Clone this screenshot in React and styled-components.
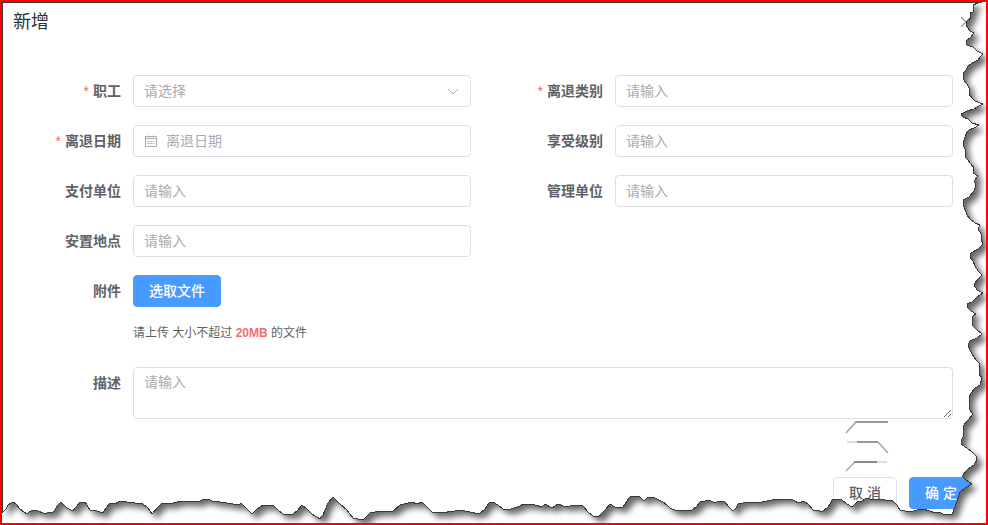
import React from 'react'
import styled, { createGlobalStyle, ThemeProvider } from 'styled-components'
import { X } from 'lucide-react'

const theme = {
  colors: {
    primary: '#479aff',
    danger: '#f56c6c',
    title: '#303133',
    text: '#606266',
    placeholder: '#a8abb2',
    border: '#dcdfe6',
    white: '#ffffff',
  },
  fonts: {
    sansSerif: '"Liberation Sans", "Noto Sans CJK SC", sans-serif',
  },
}

const GlobalStyle = createGlobalStyle`
  * {
    box-sizing: border-box;
  }

  body {
    margin: 0;
    background: #fff;
    font-family: ${theme.fonts.sansSerif};
  }

  button, input, select, textarea {
    font-family: inherit;
  }
`

const Frame = styled.main`
  position: relative;
  min-height: 100vh;
  border: 2px solid #ff0000;
  background: ${props => props.theme.colors.white};
  overflow: hidden;
`

const Header = styled.header`
  display: flex;
  align-items: center;
  justify-content: space-between;
  padding: 8px 11px 0;
`

const Title = styled.h1`
  margin: 0;
  color: ${props => props.theme.colors.title};
  font-size: 18px;
  font-weight: 400;
  line-height: 24px;
`

const CloseButton = styled.button`
  display: flex;
  margin: 0;
  padding: 0;
  border: none;
  background: none;
  color: #909399;
  cursor: pointer;
`

const Form = styled.form`
  display: grid;
  grid-template-columns: 1fr 1fr;
  gap: 18px 24px;
  padding: 41px 33px 0 11px;
`

const Item = styled.div`
  display: flex;
  align-items: flex-start;
  grid-column: ${props => props.$wide ? '1 / -1' : props.$alone ? '1' : 'auto'};
`

const Label = styled.label`
  flex: 0 0 120px;
  padding-right: 12px;
  color: ${props => props.theme.colors.text};
  font-size: 14px;
  font-weight: 700;
  line-height: 32px;
  text-align: right;
`

const Star = styled.span`
  margin-right: 4px;
  color: ${props => props.theme.colors.danger};
  font-weight: 400;
`

const Field = styled.div`
  display: flex;
  flex: 1;
  align-items: center;
  gap: 8px;
  min-width: 0;
  height: 32px;
  padding: 0 10px;
  border: 1px solid ${props => props.theme.colors.border};
  border-radius: 4px;
  color: ${props => props.theme.colors.placeholder};

  &:focus-within {
    border-color: ${props => props.theme.colors.primary};
  }
`

const Input = styled.input`
  flex: 1;
  min-width: 0;
  height: 30px;
  padding: 0;
  border: none;
  outline: none;
  background: none;
  color: ${props => props.theme.colors.text};
  font-size: 14px;

  &::placeholder {
    color: ${props => props.theme.colors.placeholder};
  }
`

const Select = styled.select`
  flex: 1;
  min-width: 0;
  height: 30px;
  padding: 0;
  border: none;
  outline: none;
  appearance: none;
  background: none;
  color: ${props => props.theme.colors.placeholder};
  font-size: 14px;
`

const Textarea = styled.textarea`
  flex: 1;
  min-width: 0;
  padding: 4px 10px;
  border: 1px solid ${props => props.theme.colors.border};
  border-radius: 4px;
  outline: none;
  color: ${props => props.theme.colors.text};
  font-size: 14px;
  line-height: 21px;
  resize: vertical;

  &::placeholder {
    color: ${props => props.theme.colors.placeholder};
  }
`

const Upload = styled.div`
  padding-bottom: 6px;
`

const Hint = styled.p`
  margin: 16px 0 0;
  color: ${props => props.theme.colors.text};
  font-size: 12px;
  line-height: 20px;

  b {
    color: ${props => props.theme.colors.danger};
  }
`

const Button = styled.button`
  min-width: 64px;
  height: 32px;
  padding: 0 15px;
  border: 1px solid ${props => props.$primary ? props.theme.colors.primary : props.theme.colors.border};
  border-radius: 4px;
  background: ${props => props.$primary ? props.theme.colors.primary : props.theme.colors.white};
  color: ${props => props.$primary ? props.theme.colors.white : props.theme.colors.text};
  font-size: 14px;
  font-weight: 500;
  line-height: 28px;
  white-space: nowrap;
  cursor: pointer;
`

const Footer = styled.footer`
  display: flex;
  justify-content: flex-end;
  gap: 12px;
  padding: 58px 13px 14px;
`

const Overlay = styled.svg`
  position: absolute;
  top: -2px;
  left: -2px;
  width: calc(100% + 4px);
  height: calc(100% + 4px);
  pointer-events: none;
`

const RIGHT_EDGE = `982,2 978,3 973,5 973,12 970,13 971,18 968,20 966,22 966,25 968,28 970,31 974,33
  971,37 966,41 967,45 973,47 977,51 983,54 980,57 978,60 974,62 968,66 966,70 963,73 963,79 967,84
  969,88 969,94 972,98 975,101 983,104 977,107 974,109 967,111 961,114 963,117 968,119 972,123 979,125
  974,128 969,130 966,134 964,140 963,145 965,149 965,157 968,160 971,164 974,168 973,173 978,176
  974,181 976,185 974,191 969,197 963,200 964,207 967,215 970,219 975,223 980,225 978,229 981,234
  981,239 983,244 978,249 971,253 970,257 973,261 975,266 978,271 982,275 977,280 974,285 977,290
  983,293 977,297 972,302 967,304 968,308 971,311 976,314 972,317 973,326 977,330 982,334 977,338
  970,341 968,345 970,350 972,354 976,360 980,364 979,370 979,374 982,378 980,385 975,388 971,393
  969,398 970,410 973,414 968,420 963,426 964,435 961,441 962,445 967,448 972,452 976,456 977,460
  974,465 968,469 962,476 966,480 972,484 965,488 960,492 958,498 955,507 952,514`

const BOTTOM_EDGE = `943,514 939,512 935,513 930,511 923,509 917,510 911,512 905,511 900,510 897,505
  892,500 885,500 878,499 873,500 867,498 862,501 857,502 852,507 847,504 842,500 833,499 828,507
  822,512 818,510 813,510 808,504 804,501 798,503 795,501 791,499 777,499 772,500 767,501 757,503
  752,502 747,502 743,503 738,504 736,508 733,511 729,507 724,501 717,502 714,503 710,500 700,502
  696,507 692,510 677,511 670,508 667,505 663,502 655,498 648,497 644,501 639,496 630,497 627,501
  623,507 615,507 610,504 605,510 602,513 599,517 593,516 588,512 583,506 578,505 570,506 563,506
  558,504 552,508 545,504 542,507 535,505 523,504 520,506 517,507 511,509 503,509 498,505 493,502
  489,503 485,509 480,513 475,513 470,512 460,510 455,511 450,511 445,513 440,512 433,513 428,508
  422,502 417,504 412,502 408,503 400,505 393,511 387,511 380,511 370,513 363,520 353,518 350,514
  347,510 340,504 336,500 333,497 328,503 323,515 320,519 312,514 307,509 302,505 297,511 293,514
  283,514 278,510 274,506 263,505 257,509 252,514 247,509 241,503 239,505 233,504 227,503 220,502
  212,501 208,499 204,499 198,502 190,501 180,501 170,504 166,503 162,503 157,508 152,514 148,508
  143,504 135,503 127,502 120,501 115,504 110,503 106,508 103,513 97,511 90,510 85,502 80,502 76,507
  73,511 67,508 61,502 57,506 55,510 52,513 48,512 46,514 43,513 38,511 33,510 29,512 27,514 24,512
  20,509 16,504 13,502 11,503 8,505 6,509 3,512`

// paper with ragged right and bottom sides, its shadow falls on the strip left over
const TornEdge = () => (
  <Overlay viewBox="0 0 988 525" preserveAspectRatio="none" aria-hidden="true">
    <defs>
      <clipPath id="outside">
        <path clipRule="evenodd" d={`M2,2 H986 V523 H2 Z M2,2 L${RIGHT_EDGE} ${BOTTOM_EDGE} Z`} />
      </clipPath>
      <filter id="soft" x="-5%" y="-5%" width="110%" height="110%">
        <feGaussianBlur stdDeviation="3" />
      </filter>
    </defs>
    <g fill="none" strokeWidth="2">
      <path stroke="#a5a5a5" strokeWidth="1.5" d="M846,433 L856,422" />
      <path stroke="#999" d="M855,422 H888" />
      <path stroke="#ddd" d="M847,442 H858" />
      <path stroke="#999" d="M857,442 H878" />
      <path stroke="#a5a5a5" strokeWidth="1.5" d="M878,442 L888,453" />
      <path stroke="#a5a5a5" strokeWidth="1.5" d="M846,471 L855,462" />
      <path stroke="#888" d="M854,462 H877" />
      <path stroke="#ddd" d="M877,462 H887" />
    </g>
    <g clipPath="url(#outside)">
      <rect x="2" y="2" width="984" height="521" fill="#fff" />
      <polygon
        points={`0,0 ${RIGHT_EDGE} ${BOTTOM_EDGE}`}
        transform="translate(5 5)"
        fill="#000"
        fillOpacity="0.6"
        filter="url(#soft)"
      />
    </g>
    <polygon
      points={`2.5,2.5 ${RIGHT_EDGE} ${BOTTOM_EDGE} 2.5,512`}
      fill="none"
      stroke="#3a3a3a"
      strokeWidth="1"
      shapeRendering="crispEdges"
    />
  </Overlay>
)

const CalendarIcon = () => (
  <svg width="14" height="14" viewBox="0 0 14 14" fill="none" stroke="currentColor" aria-hidden="true">
    <path d="M1.5,2.5 h11 v10 h-11 z M1.5,4.5 h11 M4.5,1.5 v2 M9.5,1.5 v2" />
    <path d="M3.5,7.5 h7 M3.5,9.5 h7" strokeDasharray="2 1" />
  </svg>
)

const ChevronIcon = () => (
  <svg width="14" height="14" viewBox="0 0 14 14" fill="none" stroke="currentColor" aria-hidden="true">
    <path d="M2,5 L7,10 L12,5" />
  </svg>
)

const FormItem = ({ id, label, required, wide, alone, children }) => (
  <Item $wide={wide} $alone={alone}>
    <Label htmlFor={id}>
      {required && <Star>*</Star>}
      {label}
    </Label>
    {children}
  </Item>
)

const TextItem = ({ id, placeholder = '请输入', icon, ...rest }) => (
  <FormItem id={id} {...rest}>
    <Field>
      {icon}
      <Input id={id} type="text" placeholder={placeholder} />
    </Field>
  </FormItem>
)

export default function App() {
  return (
    <ThemeProvider theme={theme}>
      <GlobalStyle />
      <Frame>
        <Header>
          <Title>新增</Title>
          <CloseButton type="button" aria-label="关闭">
            <X size={18} strokeWidth={1.5} />
          </CloseButton>
        </Header>
        <Form id="retire" onSubmit={e => e.preventDefault()}>
          <FormItem id="employee" label="职工" required>
            <Field>
              <Select id="employee" defaultValue="">
                <option value="">请选择</option>
              </Select>
              <ChevronIcon />
            </Field>
          </FormItem>
          <TextItem id="category" label="离退类别" required />
          <TextItem id="date" label="离退日期" placeholder="离退日期" icon={<CalendarIcon />} required />
          <TextItem id="level" label="享受级别" />
          <TextItem id="payer" label="支付单位" />
          <TextItem id="manager" label="管理单位" />
          <TextItem id="place" label="安置地点" alone />
          <FormItem id="file" label="附件" wide>
            <Upload>
              <Button id="file" type="button" $primary>选取文件</Button>
              <Hint>请上传 大小不超过 <b>20MB</b> 的文件</Hint>
            </Upload>
          </FormItem>
          <FormItem id="remark" label="描述" wide>
            <Textarea id="remark" rows={2} placeholder="请输入" />
          </FormItem>
        </Form>
        <Footer>
          <Button type="button">取 消</Button>
          <Button type="submit" form="retire" $primary>确 定</Button>
        </Footer>
        <TornEdge />
      </Frame>
    </ThemeProvider>
  )
}
